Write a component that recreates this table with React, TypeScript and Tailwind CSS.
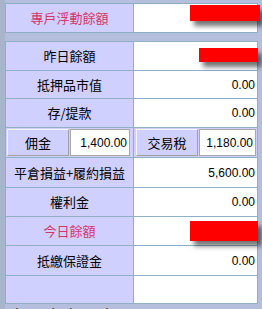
import React from "react";

const font = { fontFamily: '"Noto Sans CJK TC", "Liberation Sans", sans-serif' };

function Row({ label, value, pink, h = 29 }: { label: string; value?: string; pink?: boolean; h?: number }) {
  return (
    <div className="flex border-b border-[#8db0c4]" style={{ height: h }}>
      <div
        className={`w-[128px] shrink-0 flex items-center justify-center bg-[#d0d0fe] border-r border-[#8db0c4] text-[13px] ${pink ? "text-[#d8336a]" : "text-black"}`}
      >
        {label}
      </div>
      <div className="flex-1 bg-white flex items-center justify-end pr-[2px] text-[12px] text-black" style={{ fontFamily: '"Liberation Sans", sans-serif' }}>
        {value}
      </div>
    </div>
  );
}

function Red({ cls }: { cls: string }) {
  return <div className={`absolute bg-[#ff0000] shadow-[4px_5px_5px_rgba(0,0,0,0.55)] ${cls}`} />;
}

export default function App() {
  return (
    <div className="relative w-[262px] h-[309px] overflow-hidden bg-[#b6bedd]" style={font}>
      <div className="absolute left-0 top-0 w-[5px] h-full bg-[#a9b4cc]" />
      <div className="relative pl-[5px] pr-[4px] pt-[3px]">
        <div className="border-l border-t border-r border-[#8db0c4]">
          <Row label="專戶浮動餘額" pink h={29} />
        </div>
        <div className="h-[8px]" />
        <div className="border-l border-t border-r border-[#8db0c4]">
          <Row label="昨日餘額" h={29} />
          <Row label="抵押品市值" value="0.00" h={28} />
          <Row label="存/提款" value="0.00" h={29} />
          <div className="flex h-[30px] border-b border-[#8db0c4] bg-[#d0d0fe]">
            <div className="w-[128px] flex p-px pr-[3px] gap-px border-r border-[#8db0c4]">
              <div className="w-[62px] flex items-center justify-center text-[13px] border border-t-[#f4f4f4] border-l-[#f4f4f4] border-r-[#a0a0a0] border-b-[#a0a0a0]">佣金</div>
              <div className="flex-1 bg-white flex items-center justify-end pr-[2px] text-[12px] border border-[#a8a8a8]" style={{ fontFamily: '"Liberation Sans", sans-serif' }}>1,400.00</div>
            </div>
            <div className="flex-1 flex p-px pl-[2px] gap-px">
              <div className="w-[62px] flex items-center justify-center text-[13px] border border-t-[#f4f4f4] border-l-[#f4f4f4] border-r-[#a0a0a0] border-b-[#a0a0a0]">交易稅</div>
              <div className="flex-1 bg-white flex items-center justify-end pr-[2px] text-[12px] border border-[#a8a8a8]" style={{ fontFamily: '"Liberation Sans", sans-serif' }}>1,180.00</div>
            </div>
          </div>
          <Row label="平倉損益+履約損益" value="5,600.00" h={30} />
          <Row label="權利金" value="0.00" h={29} />
          <Row label="今日餘額" pink h={29} />
          <Row label="抵繳保證金" value="0.00" h={30} />
          <Row label="" h={28} />
        </div>
        <div className="pl-[4px] pt-[1px] text-[16px] leading-[20px] text-black tracking-[2px]">出入金處理畫面</div>
      </div>
      <Red cls="left-[190px] top-[5px] w-[70px] h-[16px]" />
      <Red cls="left-[199px] top-[48px] w-[59px] h-[14px]" />
      <Red cls="left-[190px] top-[221px] w-[68px] h-[20px]" />
    </div>
  );
}
